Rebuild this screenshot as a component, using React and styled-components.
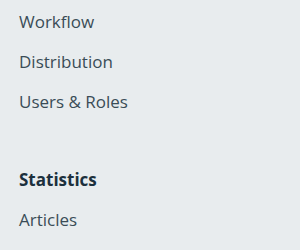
import React from 'react';
import styled, { createGlobalStyle } from 'styled-components';

const GlobalStyle = createGlobalStyle`
  html, body {
    margin: 0;
    padding: 0;
    background: #e8ecee;
  }
  body {
    font-family: "Open Sans", "Liberation Sans", sans-serif;
  }
`;

const Sidebar = styled.nav`
  width: 300px;
  height: 250px;
  overflow: hidden;
  background: #e8ecee;
  padding: 2px 19px 0;
  box-sizing: border-box;
`;

const Section = styled.ul`
  list-style: none;
  margin: 0 0 38px;
  padding: 0;
`;

const Item = styled.li`
  font-size: 17px;
  line-height: 40px;
  color: ${(p) => (p.$heading ? '#1c303d' : '#3a4c57')};
  font-weight: ${(p) => (p.$heading ? 700 : 400)};
  white-space: nowrap;
`;

const sections = [
  { items: ['Workflow', 'Distribution', 'Users & Roles'] },
  { heading: 'Statistics', items: ['Articles', 'Contributors'] },
];

const App = () => {
  return (
    <>
      <GlobalStyle />
      <Sidebar>
        {sections.map((s, i) => (
          <Section key={i}>
            {s.heading && <Item $heading>{s.heading}</Item>}
            {s.items.map((it) => (
              <Item key={it}>{it}</Item>
            ))}
          </Section>
        ))}
      </Sidebar>
    </>
  );
};

export default App;
